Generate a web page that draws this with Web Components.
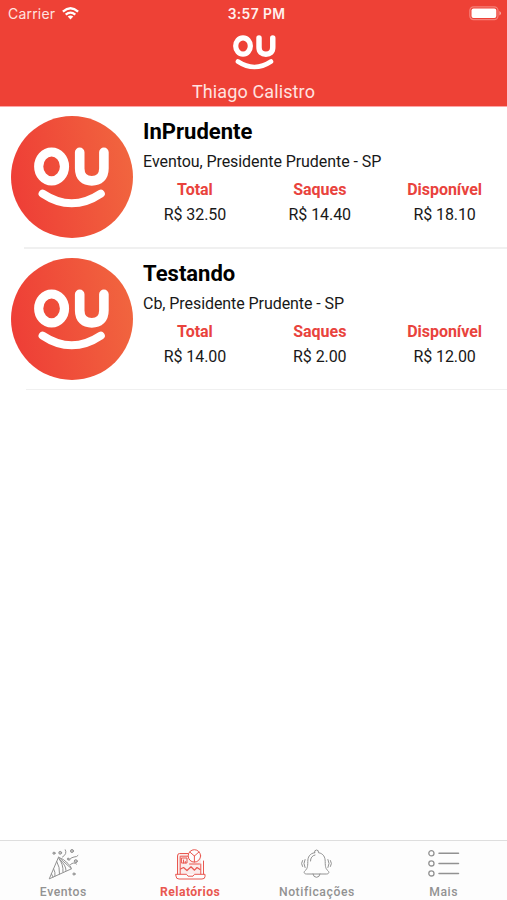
<!DOCTYPE html>
<html lang="pt-BR">
<head>
<meta charset="utf-8">
<title>Relatórios</title>
<style>
html,body{margin:0;height:100%;background:#fff}
body{font-family:Roboto,"Liberation Sans",sans-serif}
</style>
</head>
<body>
<app-screen></app-screen>
<script>
const define = (name, render) => customElements.define(name, class extends HTMLElement {
  connectedCallback() {
    if (!this.shadowRoot) this.attachShadow({mode: 'open'}).innerHTML = render(this);
  }
});

define('ou-logo', () => `
<style>:host{display:block}svg{display:block;width:100%;height:100%;overflow:visible}</style>
<svg viewBox="0 0 75 61" fill="none" stroke="#fff" stroke-linecap="round">
<ellipse cx="17.6" cy="19.4" rx="12.9" ry="14.4" stroke-width="9.2"/>
<path d="M45.7 5.3V21.5C45.7 30 50.5 33.9 57.8 33.9S69.9 30 69.9 21.5V5.3" stroke-width="9.6"/>
<path d="M8.6 46.6Q37.7 66 66.8 46.6" stroke-width="8"/></svg>`);

define('status-bar', () => `
<style>
:host{display:grid;grid-template-columns:1fr auto 1fr;align-items:center;height:26px;padding:1px 5px 0 8px;box-sizing:border-box;color:#fff;font:500 14px Inter,sans-serif}
.l{display:flex;align-items:center;gap:7px;font-weight:400;font-size:14px;letter-spacing:.2px;color:#ffe3e0}
.t{font-weight:600;font-size:13.8px;letter-spacing:.4px;color:#ffefed;margin-left:3px}
.r{justify-self:end}svg{display:block}
</style>
<div class="l"><span>Carrier</span><svg width="17" height="13" viewBox="0 0 17 13" fill="none" stroke="#fff" stroke-width="2.3"><path d="M.9 4.6Q8.5-2.1 16.1 4.6M3.7 7.7Q8.5 3.6 13.3 7.7"/><path d="M5.7 9.6Q8.5 7.5 11.3 9.6L8.5 12.4Z" fill="#fff" stroke="none"/></svg></div>
<div class="t">3:57 PM</div>
<svg class="r" width="33" height="15" viewBox="0 0 33 15"><rect x=".8" y=".8" width="28.2" height="12.8" rx="3.8" fill="none" stroke="#f58079" stroke-width="1.2"/><rect x="2.5" y="2.5" width="24.8" height="9.4" rx="2" fill="#fff"/><path d="M30.4 5v4.4q1.6-.7 1.6-2.2T30.4 5Z" fill="#f8a39d"/></svg>`);

define('app-header', () => `
<style>
:host{display:flex;flex-direction:column;align-items:center;height:106px;background:#ee4136;border-bottom:1px solid #fda5a6}
status-bar{align-self:stretch}
ou-logo{width:42.7px;height:34.7px;margin:9px 0 0 1px}
.n{margin-top:10.5px;font-size:18px;line-height:24px;letter-spacing:.12px;color:#ffe3e0}
</style>
<status-bar></status-bar><ou-logo></ou-logo><div class="n"><slot></slot></div>`);

define('money-cell', el => `
<style>
:host{display:block;text-align:center;font-size:16px;line-height:25px;letter-spacing:-.08px;color:#181818}
b{display:block;color:#e9433d;letter-spacing:-.02px}
</style><b>${el.getAttribute('label')}</b><slot></slot>`);

define('event-row', el => `
<style>
:host{display:flex;height:141.7px;position:relative;box-sizing:border-box;padding:9px 0 0 10.7px}
.a{flex:none;width:122.4px;height:122.4px;border-radius:50%;background:linear-gradient(80deg,#ee3d36 4%,#f1663f 96%)}
ou-logo{width:75px;height:61px;margin:31px 0 0 23.6px}
.c{flex:1;margin-left:10px}
h2{margin:2px 0 0;font-size:22px;line-height:28px;font-weight:700;color:#000}
p{margin:5px 0;font-size:16px;line-height:21px;letter-spacing:-.07px;color:#181818}
.m{display:grid;grid-template-columns:repeat(3,1fr);margin-left:-10.5px}
hr{position:absolute;right:0;bottom:0;left:var(--inset);height:1.5px;border:0;margin:0;background:#f0f0f0}
</style>
<div class="a"><ou-logo></ou-logo></div>
<div class="c"><h2>${el.getAttribute('name')}</h2><p>${el.getAttribute('place')}</p><div class="m"><slot></slot></div></div><hr>`);

const icons = {
events:`<path d="M1.4 29.5 10.5 8.2 23.3 19.5ZM10.5 8.2Q16 10 20 14.5T23.3 19.5M8.8 12.5Q12 18 11.5 25M5.7 20Q7.5 23 7 27M12 11Q18 16 18 21.5M3.5 25 5 28M10.8 9.5Q15.5 15 15 23"/><path d="M14.5 8Q19.5 5 17.3 .8M21 11.5Q23 8 26 8T30 6.5M22.5 15.5Q26 12.5 28.5 15"/><g fill="currentColor" fill-opacity=".5"><circle cx="6" cy="4.2" r="1.1"/><circle cx="12.2" cy="3.8" r="1.4"/><circle cx="24" cy="2" r="1.5"/><circle cx="20.2" cy="10" r=".9"/><circle cx="27.8" cy="12.2" r="1.5"/><circle cx="26" cy="25" r="1.1"/></g>`,
reports:`<path fill="currentColor" fill-opacity=".1" stroke="none" d="M3 5H26V25H3Z"/><path d="M15 4.5H4.5Q2.5 4.5 2.5 7V25M28.5 12V25M5.2 25V7.2H14M25.8 15V25M1 25.3H11.5L13 27.2H18L19.5 25.3H30V27.5Q30 30 27 30H4Q1 30 1 27.5Z"/><circle cx="19.4" cy="6.9" r="6.2" fill="#fdfdfd"/><path d="M19.4 7V13M19.4 7 14.8 3M19.4 7 24 3M6.8 9H12V14H6.8ZM8.5 14V11M10.3 14V12.5M14.5 15H24.5"/><path d="M5.5 20 8.5 18.5 12 21.5 16 17.8 19.5 21.2 22 18.5 25 20.5" stroke-width="1.2"/>`,
bell:`<path d="M13.5 3.7Q13.2 1 15.5 1T17.5 3.7C22.5 4.5 24.2 8.3 24.2 12.5 24.2 18.5 25 20 27 21.8 28.8 23.5 27.5 25 25.5 25H5.5C3.5 25 2.2 23.5 4 21.8 6 20 6.8 18.5 6.8 12.5 6.8 8.3 8.5 4.5 13.5 3.7ZM12 25Q12.4 28.3 15.5 28.3T19 25M9.5 12Q9.5 7 14 6"/><path d="M4 10.5Q1.8 14.5 4 18.5M1.5 11.5Q-.5 14.5 1.5 17.5M27 10.5Q29.2 14.5 27 18.5M29.5 11.5Q31.5 14.5 29.5 17.5"/>`,
more:`<g stroke-width="1.3"><circle cx="3.4" cy="4.3" r="2.6"/><circle cx="3.4" cy="14.4" r="2.6"/><circle cx="3.4" cy="24.4" r="2.6"/><path d="M11 4.3H30.5M11 14.4H30.5M11 24.4H30.5" stroke-width="1.5"/></g>`};

define('tab-item', el => `
<style>
:host{display:flex;flex-direction:column;align-items:center;padding-top:7.5px;color:#929292}
:host([active]){color:#e95850}
svg{display:block;overflow:visible}
span{margin-top:4.5px;font-size:12.2px;line-height:16px;font-weight:500;letter-spacing:.56px}
:host([active]) span{font-weight:700;letter-spacing:.42px;color:#e95850}
</style>
<svg width="31" height="31" viewBox="0 0 31 31" fill="none" stroke="currentColor" stroke-width="1" stroke-linejoin="round" stroke-linecap="round">${icons[el.getAttribute('icon')]}</svg>
<span><slot></slot></span>`);

define('tab-bar', () => `
<style>:host{display:grid;grid-template-columns:repeat(4,1fr);height:60px;box-sizing:border-box;border-top:1.5px solid #dedede;background:#fdfdfd;padding:0}</style><slot></slot>`);

define('app-screen', () => `
<style>:host{display:flex;flex-direction:column;height:900px;background:#fff}main{flex:1}</style>
<app-header>Thiago Calistro</app-header>
<main>
<event-row name="InPrudente" place="Eventou, Presidente Prudente - SP" style="--inset:24px"><money-cell label="Total">R$ 32.50</money-cell><money-cell label="Saques">R$ 14.40</money-cell><money-cell label="Disponível">R$ 18.10</money-cell></event-row>
<event-row name="Testando" place="Cb, Presidente Prudente - SP" style="--inset:26px"><money-cell label="Total">R$ 14.00</money-cell><money-cell label="Saques">R$ 2.00</money-cell><money-cell label="Disponível">R$ 12.00</money-cell></event-row>
</main>
<tab-bar><tab-item icon="events">Eventos</tab-item><tab-item icon="reports" active>Relatórios</tab-item><tab-item icon="bell">Notificações</tab-item><tab-item icon="more">Mais</tab-item></tab-bar>`);
</script>
</body>
</html>
